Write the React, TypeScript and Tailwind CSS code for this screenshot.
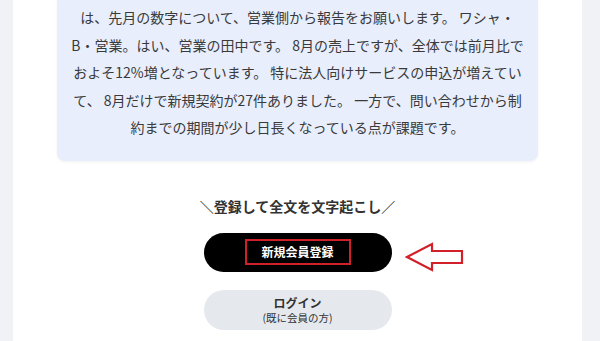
import React from 'react';

const lines = [
  'は、先月の数字について、営業側から報告をお願いします。 ワシャ・',
  'B・営業。はい、営業の田中です。 8月の売上ですが、全体では前月比で',
  'およそ12%増となっています。 特に法人向けサービスの申込が増えてい',
  'て、 8月だけで新規契約が27件ありました。 一方で、問い合わせから制',
  '約までの期間が少し日長くなっている点が課題です。',
];

const ArrowLeft = () => (
  <svg width="60" height="32" viewBox="0 0 60 32" fill="none">
    <path
      d="M2 16 L27 3 L27 10 L57 10 L57 22 L27 22 L27 29 Z"
      stroke="#d2202a"
      strokeWidth="2.2"
      strokeLinejoin="miter"
      fill="white"
    />
  </svg>
);

export default function App() {
  return (
    <div
      className="flex w-[600px] h-[341px] overflow-hidden bg-[#f1f2f5]"
      style={{ fontFamily: '"Noto Sans CJK JP", "Noto Sans", sans-serif' }}
    >
      <div className="w-[13px] shrink-0" />
      <div className="flex-1 bg-white px-[44px] flex flex-col items-center">
        <div className="w-full bg-[#e8eefc] rounded-b-lg shadow-[0_1px_3px_rgba(0,0,0,0.06)] pt-[4px] pb-[19px] text-center text-[14px] leading-[27.5px] text-[#3a3a3a]">
          {lines.map((l) => (
            <div key={l} className="whitespace-nowrap">{l}</div>
          ))}
        </div>

        <div className="mt-[35px] text-[14px] leading-[20px] font-bold text-[#333]">
          ＼登録して全文を文字起こし／
        </div>

        <div className="relative mt-[17px]">
          <button className="w-[188px] h-[39px] rounded-full bg-black flex items-center justify-center">
            <span className="w-[106px] h-[26px] border-2 border-[#d2202a] flex items-center justify-center text-white text-[12px] font-bold leading-none">
              新規会員登録
            </span>
          </button>
          <div className="absolute left-[201px] top-[8px]">
            <ArrowLeft />
          </div>
        </div>

        <button className="mt-[18px] w-[188px] h-[40px] rounded-full bg-[#e5e9ee] flex flex-col items-center justify-center text-[#333]">
          <span className="text-[12px] font-bold leading-[15px]">ログイン</span>
          <span className="text-[10.5px] leading-[15px]">(既に会員の方)</span>
        </button>
      </div>
      <div className="w-[18px] shrink-0" />
    </div>
  );
}
